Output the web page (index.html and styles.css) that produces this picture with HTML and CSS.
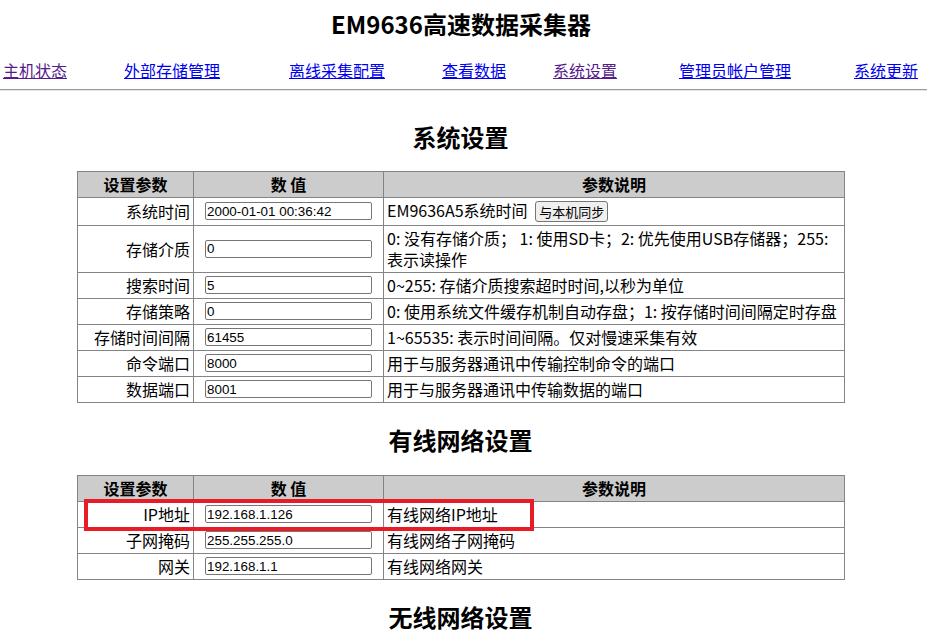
FILE: index.html
```html
<!DOCTYPE html>
<html lang="zh-CN">
<head>
<meta charset="utf-8">
<title>EM9636高速数据采集器</title>
<link rel="stylesheet" href="styles.css">
</head>
<body>
<h1 class="title">EM9636高速数据采集器</h1>
<nav class="nav">
  <a class="visited" href="#">主机状态</a>
  <a href="#">外部存储管理</a>
  <a href="#">离线采集配置</a>
  <a href="#">查看数据</a>
  <a class="visited" href="#">系统设置</a>
  <a href="#">管理员帐户管理</a>
  <a href="#">系统更新</a>
</nav>
<hr class="rule">
<main class="content">
  <h2 class="section-title first">系统设置</h2>
  <div class="table-wrap">
    <table class="settings">
      <colgroup><col class="c1"><col class="c2"><col class="c3"></colgroup>
      <tr><th>设置参数</th><th>数 值</th><th>参数说明</th></tr>
      <tr><td class="name">系统时间</td><td class="val"><input class="field" value="2000-01-01 00:36:42"></td><td class="desc">EM9636A5系统时间 <button class="btn">与本机同步</button></td></tr>
      <tr><td class="name">存储介质</td><td class="val"><input class="field" value="0"></td><td class="desc">0: 没有存储介质；&nbsp;1: 使用SD卡；2: 优先使用USB存储器；255: 表示读操作</td></tr>
      <tr><td class="name">搜索时间</td><td class="val"><input class="field" value="5"></td><td class="desc">0~255: 存储介质搜索超时时间,以秒为单位</td></tr>
      <tr><td class="name">存储策略</td><td class="val"><input class="field" value="0"></td><td class="desc">0: 使用系统文件缓存机制自动存盘；1: 按存储时间间隔定时存盘</td></tr>
      <tr><td class="name">存储时间间隔</td><td class="val"><input class="field" value="61455"></td><td class="desc">1~65535: 表示时间间隔。仅对慢速采集有效</td></tr>
      <tr><td class="name">命令端口</td><td class="val"><input class="field" value="8000"></td><td class="desc">用于与服务器通讯中传输控制命令的端口</td></tr>
      <tr><td class="name">数据端口</td><td class="val"><input class="field" value="8001"></td><td class="desc">用于与服务器通讯中传输数据的端口</td></tr>
    </table>
  </div>

  <h2 class="section-title">有线网络设置</h2>
  <div class="table-wrap">
    <table class="settings">
      <colgroup><col class="c1"><col class="c2"><col class="c3"></colgroup>
      <tr><th>设置参数</th><th>数 值</th><th>参数说明</th></tr>
      <tr><td class="name">IP地址</td><td class="val"><input class="field" value="192.168.1.126"></td><td class="desc">有线网络IP地址</td></tr>
      <tr><td class="name">子网掩码</td><td class="val"><input class="field" value="255.255.255.0"></td><td class="desc">有线网络子网掩码</td></tr>
      <tr><td class="name">网关</td><td class="val"><input class="field" value="192.168.1.1"></td><td class="desc">有线网络网关</td></tr>
    </table>
    <div class="highlight"></div>
  </div>

  <h2 class="section-title">无线网络设置</h2>
</main>
</body>
</html>
```

FILE: styles.css
```css
html, body {
  margin: 0;
  padding: 0;
  background: #fff;
}
body {
  font-family: "Noto Sans CJK SC", "Noto Sans", sans-serif;
  font-size: 16px;
  line-height: 21px;
  color: #000;
  width: 927px;
}
.title {
  margin: 10px 5px 0 0;
  font-size: 24px;
  line-height: 28px;
  font-weight: bold;
  text-align: center;
}
.nav {
  display: grid;
  grid-template-columns: 121px 165px 153px 111px 126px 175px auto;
  padding-left: 3px;
  margin-top: 22px;
  line-height: 21px;
}
.nav a {
  color: #0000ee;
  text-decoration: underline;
  justify-self: start;
}
.nav a.visited {
  color: #551a8b;
}
.rule {
  margin: 8px 0 0 0;
  border: 0;
  border-top: 1px solid #9a9a9a;
  border-bottom: 1px solid #e4e4e4;
  height: 0;
}
.content {
  width: 921px;
}
.section-title {
  margin: 23px 0 21px 0;
  font-size: 24px;
  line-height: 28px;
  font-weight: bold;
  text-align: center;
}
.section-title.first {
  margin-top: 32px;
  margin-bottom: 20px;
}
.table-wrap {
  position: relative;
  width: 767px;
  margin: 0 auto;
}
.settings {
  width: 767px;
  border-collapse: collapse;
  border: 1px solid #848484;
  table-layout: fixed;
}
.c1 { width: 116px; }
.c2 { width: 190px; }
.c3 { width: 461px; }
.settings th,
.settings td {
  border: 1px solid #848484;
  padding: 2px 3px;
  line-height: 21px;
  vertical-align: middle;
}
.settings th {
  background: #cccccc;
  font-weight: bold;
  text-align: center;
}
.settings td.name {
  text-align: right;
}
.settings td.val {
  text-align: center;
  padding: 2px 0;
}
.settings td.desc {
  text-align: left;
}
.field {
  box-sizing: border-box;
  width: 167px;
  height: 18px;
  margin: 1px 0 0 0;
  padding: 0 1px;
  border: 1px solid #767676;
  border-radius: 2px;
  font-family: "Liberation Sans", Arial, sans-serif;
  font-size: 13.4px;
  color: #000;
  vertical-align: top;
  background: #fff;
}
.btn {
  font-family: "Noto Sans CJK SC", sans-serif;
  font-size: 13px;
  line-height: 16px;
  height: 21px;
  padding: 1px 3px;
  margin: 1px 0 1px 4px;
  border: 1px solid #767676;
  border-radius: 3px;
  background: #efefef;
  color: #000;
  vertical-align: top;
}
.highlight {
  position: absolute;
  left: 7px;
  top: 24px;
  width: 450px;
  height: 32px;
  box-sizing: border-box;
  border: 4px solid #e81c27;
  pointer-events: none;
}
```
